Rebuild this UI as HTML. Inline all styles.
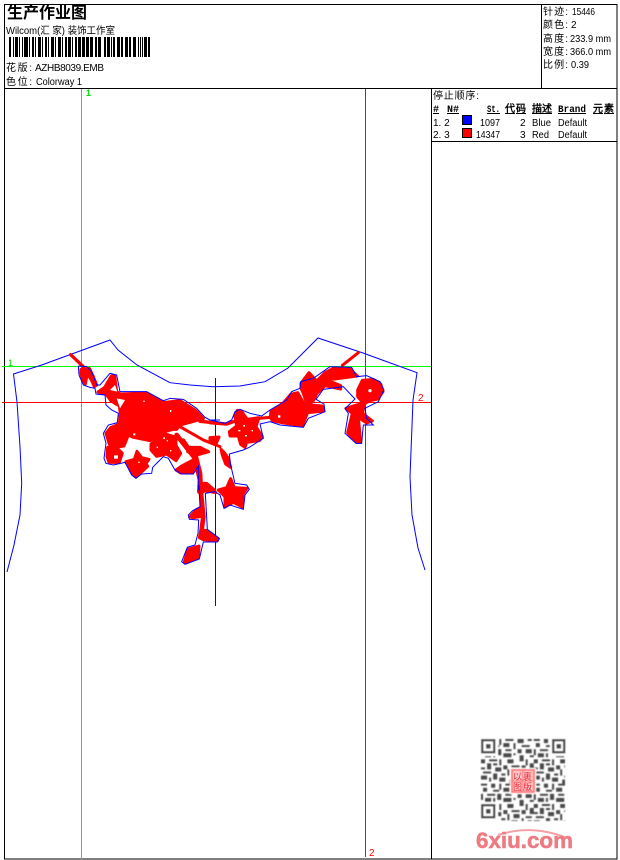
<!DOCTYPE html>
<html><head><meta charset="utf-8"><style>
html,body{margin:0;padding:0;background:#fff;width:620px;height:860px;overflow:hidden}
svg{display:block}
text{font-family:"Liberation Sans","WenQuanYi Zen Hei","Noto Sans CJK SC",sans-serif;font-size:10px;fill:#000}
.c{font-family:"WenQuanYi Zen Hei","Noto Sans CJK SC",sans-serif}
.b{font-family:"Liberation Mono","WenQuanYi Zen Hei",monospace;font-weight:bold;font-size:10px;text-decoration:underline}
.r{fill:#f00;stroke:#f00;stroke-width:9;stroke-linejoin:round}
.bl{fill:none;stroke:#00f;stroke-width:3}
.st{fill:none;stroke:#f00;stroke-linecap:round}
</style></head><body>
<svg width="620" height="860" viewBox="0 0 620 860" xmlns="http://www.w3.org/2000/svg">
<defs>
<filter id="bl"><feGaussianBlur stdDeviation="0.45"/></filter>
<pattern id="qp" width="26" height="22" patternUnits="userSpaceOnUse" patternTransform="translate(481 739) scale(2.03)">
<path fill="#4a4a4a" d="M0 0h3v1H0zM5 0h2v2H5zM9 0h1v3H9zM12 0h4v1h-4zM18 0h3v2h-3zM23 0h2v1h-2zM1 2h2v2H1zM6 3h3v1H6zM11 2h3v2h-3zM16 2h1v3h-1zM20 3h4v1h-4zM0 5h1v3H0zM3 5h4v1H3zM8 5h2v3H8zM12 5h3v1h-3zM18 5h2v2h-2zM22 5h3v2h-3zM2 7h3v2H2zM6 7h1v2H6zM11 7h4v2h-4zM16 7h1v1h-1zM19 8h2v3h-2zM24 8h2v1h-2zM0 10h2v2H0zM4 10h4v1H4zM9 10h1v3H9zM13 10h3v2h-3zM22 10h1v3h-1zM3 12h2v3H3zM6 12h2v1H6zM11 13h2v2h-2zM15 13h4v1h-4zM20 13h2v2h-2zM24 12h2v3h-2zM0 14h2v1H0zM7 14h3v2H7zM13 15h1v3h-1zM16 15h3v2h-3zM22 16h3v1h-3zM1 16h4v1H1zM6 17h2v3H6zM10 17h2v1h-2zM20 17h1v3h-1zM0 18h3v2H0zM4 19h1v2H4zM9 19h3v2H9zM15 18h3v1h-3zM23 18h2v3h-2zM14 20h4v2h-4z"/>
</pattern>
</defs>

<!-- frame -->
<g fill="none" stroke="#000" stroke-width="1" shape-rendering="crispEdges">
<rect x="4.5" y="4.5" width="612.5" height="854.5"/>
<path d="M4 88.5H617M541.5 4V88M431.5 88V859M431 141.5H617"/>
</g>

<!-- header text -->
<text class="c" x="7" y="18" style="font-size:16px;font-weight:bold" textLength="80" lengthAdjust="spacingAndGlyphs">生产作业图</text>
<text x="6" y="34" textLength="109" lengthAdjust="spacingAndGlyphs" style="font-size:10px">Wilcom(汇 家) 装饰工作室</text>
<g fill="#000" shape-rendering="crispEdges">
<path d="M9 37h2v20H9zM13 37h1v20h-1zM15 37h3v20h-3zM19 37h1v20h-1zM22 37h1v20h-1zM24 37h4v20h-4zM29 37h1v20h-1zM32 37h2v20h-2zM35 37h1v20h-1zM38 37h3v20h-3zM42 37h1v20h-1zM45 37h2v20h-2zM48 37h1v20h-1zM51 37h3v20h-3zM55 37h1v20h-1zM58 37h3v20h-3zM62 37h1v20h-1zM65 37h2v20h-2zM68 37h3v20h-3zM72 37h1v20h-1zM75 37h2v20h-2zM78 37h3v20h-3zM82 37h3v20h-3zM86 37h3v20h-3zM90 37h3v20h-3zM95 37h2v20h-2zM98 37h3v20h-3zM104 37h2v20h-2zM107 37h3v20h-3zM111 37h1v20h-1zM113 37h2v20h-2zM117 37h3v20h-3zM121 37h2v20h-2zM125 37h3v20h-3zM129 37h2v20h-2zM133 37h3v20h-3zM138 37h1v20h-1zM140 37h1v20h-1zM142 37h1v20h-1zM144 37h3v20h-3zM148 37h2v20h-2z"/>
</g>
<text x="6" y="71" textLength="26">花版:</text>
<text x="35" y="71" textLength="69">AZHB8039.EMB</text>
<text x="6" y="85" textLength="26">色位:</text>
<text x="36" y="85" textLength="46" lengthAdjust="spacingAndGlyphs">Colorway 1</text>

<!-- right header -->
<text x="543" y="15" textLength="25">针迹:</text><text x="572" y="15" textLength="23" lengthAdjust="spacingAndGlyphs">15446</text>
<text x="543" y="28" textLength="25">颜色:</text><text x="571" y="28">2</text>
<text x="543" y="42" textLength="25">高度:</text><text x="570" y="42" textLength="41" lengthAdjust="spacingAndGlyphs">233.9 mm</text>
<text x="543" y="55" textLength="25">宽度:</text><text x="570" y="55" textLength="41" lengthAdjust="spacingAndGlyphs">366.0 mm</text>
<text x="543" y="68" textLength="25">比例:</text><text x="571" y="68" textLength="18" lengthAdjust="spacingAndGlyphs">0.39</text>

<!-- table -->
<text x="433" y="99" textLength="46">停止顺序:</text>
<text class="b" x="433" y="112">#</text>
<text class="b" x="447" y="112" textLength="12" lengthAdjust="spacingAndGlyphs">N#</text>
<text class="b" x="487" y="112" textLength="13" lengthAdjust="spacingAndGlyphs">St.</text>
<text class="b" x="505" y="112" textLength="21">代码</text>
<text class="b" x="532" y="112" textLength="20">描述</text>
<text class="b" x="558" y="112" textLength="28" lengthAdjust="spacingAndGlyphs">Brand</text>
<text class="b" x="593" y="112" textLength="21">元素</text>
<text x="433" y="126">1. 2</text>
<rect x="462.5" y="115.5" width="9" height="9" fill="#00f" stroke="#000" shape-rendering="crispEdges"/>
<text x="480" y="126" textLength="20" lengthAdjust="spacingAndGlyphs">1097</text><text x="520" y="126">2</text><text x="532" y="126" textLength="19" lengthAdjust="spacingAndGlyphs">Blue</text><text x="558" y="126" textLength="29" lengthAdjust="spacingAndGlyphs">Default</text>
<text x="433" y="138">2. 3</text>
<rect x="462.5" y="128.5" width="9" height="9" fill="#f00" stroke="#000" shape-rendering="crispEdges"/>
<text x="476" y="138" textLength="24" lengthAdjust="spacingAndGlyphs">14347</text><text x="520" y="138">3</text><text x="532" y="138" textLength="17" lengthAdjust="spacingAndGlyphs">Red</text><text x="558" y="138" textLength="29" lengthAdjust="spacingAndGlyphs">Default</text>

<!-- guides -->
<g shape-rendering="crispEdges" stroke-width="1" fill="none">
<path stroke="#00ff00" d="M81.5 89V859M2 366.5H431"/>
<path stroke="#ff0000" d="M365.5 89V857M2 402.5H431"/>
<path stroke="#0000ff" d="M215.5 378V606"/>
</g>
<text x="86" y="96" style="fill:#0d0;font-size:9px;font-weight:bold">1</text>
<text x="8" y="366" style="fill:#0d0;font-size:9px">1</text>
<text x="418" y="401" style="fill:#f00;font-size:10px">2</text>
<text x="369" y="856" style="fill:#f00;font-size:10px">2</text>

<!-- garment -->
<g fill="none" stroke="#00f" stroke-width="1">
<path d="M7 572 L14 545 L20 515 L21.7 483 L20 447 L17 402 L13.5 374 L41.7 365 L110 340 L118 350 L137 365 L170 382.7 L190 385 L213 386.7 L240 386 L265 381.7 L288 368 L318 338 L363 353 L417 372.7 L413 400 L410 477 L412 515 L418 548 L425 570"/>
</g>

<!-- embroidery red -->
<g transform="translate(0 330) scale(.33333)">
<path class="r" d="M243 118L268 115 280 140 290 165 283 170 275 152 262 130 256 162 248 150 243 130Z"/>
<path class="st" stroke-width="10" d="M212 74L250 110"/>
<path class="r" d="M294 186L314 172 334 138 344 138 350 184 360 192 440 189 490 218 540 212 588 242 610 266 540 285 530 298 520 298 490 306 450 332 400 322 385 315 372 348 345 352 328 343 318 310 332 293 358 282 361 250 358 228 333 213 318 192Z"/>
<path d="M330 180L345 165 352 185ZM350 205L375 210 360 235Z" fill="#fff"/>
<path class="r" d="M323 352L345 348 367 370 358 397 327 397 321 380Z"/>
<rect x="342" y="376" width="12" height="10" fill="#fff"/>
<path class="r" d="M378 395L403 388 411 364 425 383 447 388 438 400 443 409 428 423 406 440 397 428Z"/>
<path class="r" d="M453 342L490 310 528 322 528 346 542 370 528 392 500 372 470 379 453 360Z"/>
<path class="st" stroke-width="9" d="M540 290L610 330 660 350"/>
<path class="st" stroke-width="10" d="M600 274L660 280"/>
<path class="r" d="M568 352L600 352 626 365 590 375 563 365Z"/>
<path class="r" d="M528 420L547 407 583 388 587 396 578 427 542 429Z"/>
<path class="st" stroke-width="14" d="M530 315L585 385 600 450 598 485"/>
<path d="M400 310h6v6h-6zM430 212h4v4h-4zM510 240h4v6h-4zM490 322h5v5h-5zM470 350h4v4h-4zM510 360h4v4h-4zM500 330h4v4h-4zM415 395h4v4h-4z" fill="#fff"/>
</g>

<g transform="translate(100 440) scale(.33333)">
<path class="st" stroke-width="14" d="M288 52L300 100 303 160 310 230 302 292"/>
<path class="r" d="M303 130L320 130 343 150 347 158 315 152 303 160Z"/>
<path class="r" d="M355 150L380 143 392 116 403 143 441 145 429 162 427 201 400 187 375 201 375 170Z"/>
<path class="r" d="M269 231L291 208 308 203 312 228 280 233Z"/>
<path class="r" d="M303 271L320 271 355 296 352 302 310 299 298 293Z"/>
<path class="r" d="M253 366L264 328 297 318 295 353 258 369Z"/>
<path class="r" d="M363 28L373 38 383 52 392 82 377 72 367 45Z"/>
<path class="st" stroke-width="10" d="M250 0L285 50"/>
</g>

<g transform="translate(210 330) scale(.33333)">
<path class="st" stroke-width="10" d="M0 278L50 282 70 275"/>
<path class="r" d="M0 323L27 321 18 342 0 337Z"/>
<path class="r" d="M58 305L80 288 75 260 82 241 94 243 112 268 147 263 138 290 157 320 148 332 110 337 105 352 92 343 85 318 60 318Z"/>
<path d="M100 285h5v5h-5zM85 300h6v4h-6zM105 315h6v4h-6zM125 300h4v4h-4z" fill="#fff"/>
<path class="st" stroke-width="9" d="M145 265L180 262"/>
<path class="r" d="M183 242L212 228 242 193 263 188 283 223 337 228 342 243 293 248 288 260 278 287 240 282 210 277 187 272 181 262Z"/>
<rect x="204" y="256" width="7" height="7" fill="#fff"/>
<path class="r" d="M273 160L297 128 320 153 345 128 370 115 418 115 442 138 405 143 350 150 392 167 392 177 345 167 320 192 310 212 275 242 265 238 288 215 280 190 273 175Z"/>
<path class="st" stroke-width="9" d="M397 106L445 68"/>
<path class="r" d="M443 180L457 151 490 148 512 162 519 185 503 207 480 212 462 222 443 200Z"/>
<circle cx="480" cy="182" r="5" fill="#fff"/>
<path class="r" d="M408 235L462 218 458 250 487 273 470 279 445 262 452 337 440 337 413 308 427 250Z"/>
</g>

<!-- embroidery blue contours -->
<g transform="translate(0 330) scale(.33333)">
<polyline class="bl" points="235,108 237,135 250,165 270,172 285,175 288,192 315,195 318,225 335,240 355,250 352,278 325,285 310,310 318,340 312,385 318,400 340,405 375,397 395,435 408,445 425,432 455,430 458,412 475,395 490,380 505,385 525,420 545,432 580,432 595,408 595,480"/>
<polyline class="bl" points="660,270 630,270 615,262 590,235 550,208 510,205 490,212 440,185 360,185 350,135 330,130 300,165 290,165 275,125 260,110 235,108"/>
</g>
<g transform="translate(100 440) scale(.33333)">
<polyline class="bl" points="297,135 300,200 278,212 265,225 268,238 296,240 294,280 285,315 262,322 245,365 255,373 298,357 310,306 352,306 358,295 322,268 316,160 345,155 360,165 372,205 390,195 430,208 435,165 448,148 440,135 405,130 392,75 388,42"/>
</g>
<g transform="translate(210 330) scale(.33333)">
<polyline class="bl" points="58,372 100,360 118,352 160,325 150,282 180,275 210,285 280,292 295,265 345,245 342,222 318,208 340,178 400,170 435,207 405,236 415,250 405,310 438,340 455,340 460,285 490,285 470,265 465,235 505,215 522,180 510,155 470,137 440,140 425,112 360,110 310,145 272,155 270,175 245,185 230,210 180,240 155,258 120,250 90,238 75,245 65,270 45,280 0,270"/>
</g>

<!-- QR -->
<g filter="url(#bl)">
<rect x="481" y="739" width="84" height="82" fill="url(#qp)"/>
<g fill="#fff"><rect x="480" y="738" width="18" height="18"/><rect x="550" y="738" width="18" height="18"/><rect x="480" y="802" width="18" height="20"/></g>
<g fill="none" stroke="#4a4a4a" stroke-width="2.4">
<rect x="482.2" y="740.2" width="12" height="12"/><rect x="553.2" y="740.2" width="11" height="12"/><rect x="482.2" y="805.2" width="12" height="12"/>
</g>
<g fill="#4a4a4a"><rect x="486" y="744" width="4.6" height="4.6"/><rect x="556.5" y="744" width="4.6" height="4.6"/><rect x="486" y="809" width="4.6" height="4.6"/></g>
<rect x="510" y="768" width="26" height="26" fill="#fff"/>
<rect x="511" y="769" width="24" height="24" fill="#f77"/>
<rect x="513" y="771" width="20" height="20" fill="#fcc"/>
<path d="M522.5 771v20M513 781h20" stroke="#f77" stroke-width="1.2"/>
</g>
<text class="c" x="513" y="780" style="font-size:9px;fill:#e23">以</text><text class="c" x="523" y="780" style="font-size:9px;fill:#e23">裹</text>
<text class="c" x="513" y="790" style="font-size:9px;fill:#e23">图</text><text class="c" x="523" y="790" style="font-size:9px;fill:#e23">版</text>

<!-- logo -->
<path d="M498 835Q532 824 567 838" fill="none" stroke="#f3a0a6" stroke-width="2"/>
<text x="476" y="848" textLength="97" lengthAdjust="spacingAndGlyphs" style="font-size:22px;font-weight:bold;fill:#ee7a82;stroke:#ee7a82;stroke-width:.5px">6xiu.com</text>
</svg>
</body></html>
